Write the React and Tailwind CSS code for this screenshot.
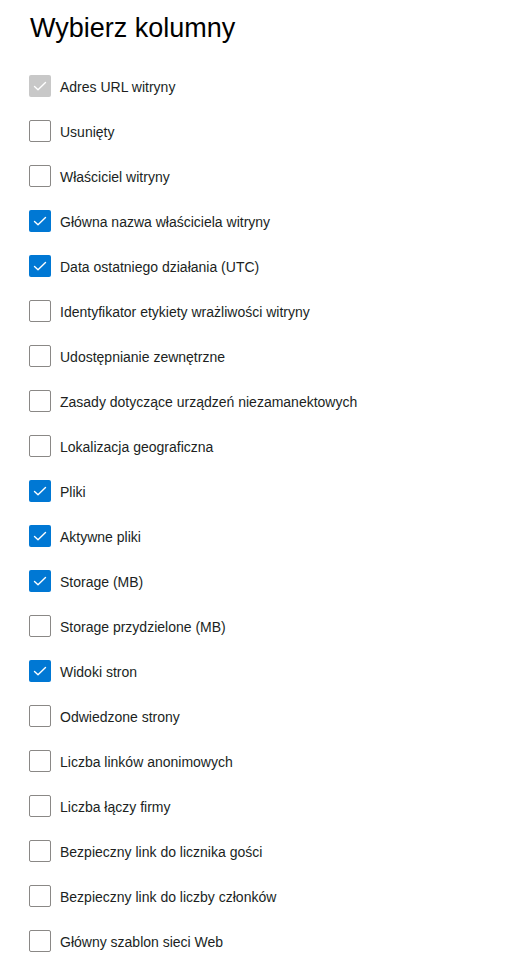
const COLUMNS = [
  { label: 'Adres URL witryny', checked: true, disabled: true },
  { label: 'Usunięty' },
  { label: 'Właściciel witryny' },
  { label: 'Główna nazwa właściciela witryny', checked: true },
  { label: 'Data ostatniego działania (UTC)', checked: true },
  { label: 'Identyfikator etykiety wrażliwości witryny' },
  { label: 'Udostępnianie zewnętrzne' },
  { label: 'Zasady dotyczące urządzeń niezamanektowych' },
  { label: 'Lokalizacja geograficzna' },
  { label: 'Pliki', checked: true },
  { label: 'Aktywne pliki', checked: true },
  { label: 'Storage (MB)', checked: true },
  { label: 'Storage przydzielone (MB)' },
  { label: 'Widoki stron', checked: true },
  { label: 'Odwiedzone strony' },
  { label: 'Liczba linków anonimowych' },
  { label: 'Liczba łączy firmy' },
  { label: 'Bezpieczny link do licznika gości' },
  { label: 'Bezpieczny link do liczby członków' },
  { label: 'Główny szablon sieci Web' },
];

function CheckBox({ checked, disabled }) {
  if (checked) {
    return (
      <span className={`w-[22px] h-[22px] rounded-[2px] flex items-center justify-center shrink-0 ${disabled ? 'bg-[#c8c8c8]' : 'bg-[#0078d4]'}`}>
        <svg width="22" height="22" viewBox="0 0 22 22" fill="none">
          <path d="M5.5 11.5 L9 14.8 L16.5 7.5" stroke="white" strokeWidth="1.4" strokeLinecap="round" strokeLinejoin="round" />
        </svg>
      </span>
    );
  }
  return <span className="w-[22px] h-[22px] rounded-[2px] border border-[#8a8886] bg-white shrink-0" />;
}

export default function App() {
  return (
    <div className="min-h-[973px] bg-white px-[29px] pt-[12px] text-[#201f1e]" style={{ fontFamily: '"Liberation Sans", Arial, sans-serif' }}>
      <h1 className="text-[27px] leading-[32px] text-black pl-[1px]">Wybierz kolumny</h1>
      <div className="mt-[19px] flex flex-col">
        {COLUMNS.map((c) => (
          <label key={c.label} className="h-[45px] flex items-center gap-[9px]">
            <CheckBox checked={c.checked} disabled={c.disabled} />
            <span className="text-[14px] leading-[20px] mt-[3px] text-[#201f1e]">{c.label}</span>
          </label>
        ))}
      </div>
    </div>
  );
}
